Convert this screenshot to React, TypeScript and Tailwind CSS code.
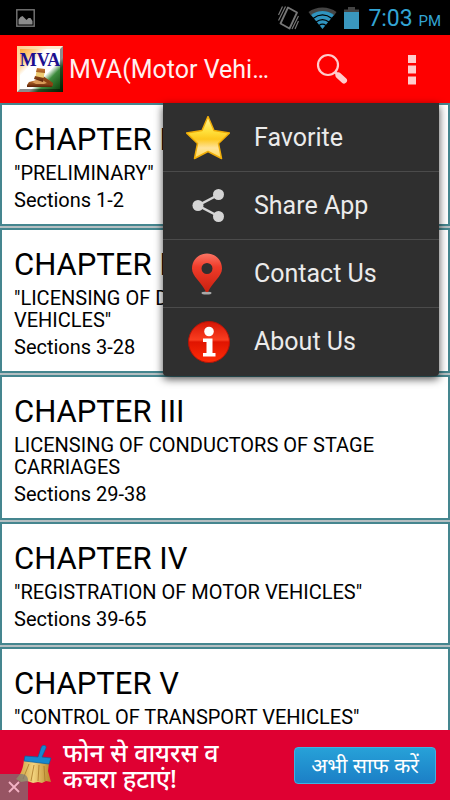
import type { ReactNode } from 'react';

const chapters = [
  { title: 'CHAPTER I', text: '"PRELIMINARY"', sections: 'Sections 1-2' },
  { title: 'CHAPTER II', text: '"LICENSING OF DRIVERS OF MOTOR VEHICLES"', sections: 'Sections 3-28' },
  { title: 'CHAPTER III', text: 'LICENSING OF CONDUCTORS OF STAGE CARRIAGES', sections: 'Sections 29-38' },
  { title: 'CHAPTER IV', text: '"REGISTRATION OF MOTOR VEHICLES"', sections: 'Sections 39-65' },
  { title: 'CHAPTER V', text: '"CONTROL OF TRANSPORT VEHICLES"', sections: 'Sections 66-96' },
];

function StatusBar() {
  return (
    <div className="flex h-[35px] shrink-0 items-center bg-black pl-4 pr-[9px] text-[#33a5d4]">
      <svg width="19" height="18" viewBox="0 0 19 18" aria-hidden="true">
        <rect x="0.8" y="0.8" width="17.4" height="16.4" fill="none" stroke="#777" strokeWidth="1.4" />
        <path d="M2.5 15.5v-5l2-2.5 2-1 2 2 2 2 2-2h2l2 3v3.500z" fill="#8c8c8c" />
      </svg>
      <div className="flex-1" />
      <svg width="21" height="24" viewBox="0 0 21 24" fill="none" stroke="#777" aria-hidden="true">
        <path d="M10 1.500l9 5-7.500 16-9-5z" strokeWidth="1.800" strokeLinejoin="round" />
        <path d="M4.500 0.500L0.500 9M7.500 0.500L0.500 14.500M20.500 10L14 23M20.500 15L17 23" strokeWidth="1.200" />
      </svg>
      <svg className="ml-[9px]" width="29" height="22" viewBox="0 0 29 22" aria-hidden="true">
        <path d="M0.500 5C8-1 21-1 28.500 5L26 8.500C19 3 10 3 3 8.500z" fill="#444" />
        <path d="M3 8C10 2.800 19 2.800 26 8L14.500 22z" fill="#2f94c0" />
        <path d="M5 11.500c6-4.500 13-4.500 19 0M8 15c4-3 9-3 13 0M11 18.500c2-1.500 5-1.500 7 0" fill="none" stroke="#000" strokeWidth="1.300" />
      </svg>
      <svg className="ml-[7px]" width="15" height="22" viewBox="0 0 15 22" aria-hidden="true">
        <path d="M0 2.500h4V0h7v2.500h4V6H0z" fill="#444" />
        <rect y="5" width="15" height="17" fill="#3a97be" />
      </svg>
      <span className="ml-[9px] pt-1 text-[23px] leading-[31px]">
        7:03 <span className="text-[15px]">PM</span>
      </span>
    </div>
  );
}

function AppLogo() {
  return (
    <svg width="46" height="46" viewBox="0 0 46 46" className="shrink-0" aria-hidden="true">
      <defs>
        <linearGradient id="flag" x1="0" y1="0" x2="1" y2="1">
          <stop offset="0" stopColor="#ff9b20" />
          <stop offset="0.24" stopColor="#ffd08a" />
          <stop offset="0.36" stopColor="#fff" />
          <stop offset="0.62" stopColor="#fff" />
          <stop offset="0.72" stopColor="#3d8b3d" />
          <stop offset="1" stopColor="#023402" />
        </linearGradient>
        <linearGradient id="wood" x1="0" y1="0" x2="0" y2="1">
          <stop offset="0" stopColor="#c87832" />
          <stop offset="1" stopColor="#5e2208" />
        </linearGradient>
      </defs>
      <rect width="46" height="46" fill="url(#flag)" />
      <path d="M0 46V0h46l-3 3H3v40z" fill="#ffe3ba" opacity="0.700" />
      <path d="M46 0v46H0l3-3h40V3z" fill="#000" opacity="0.450" />
      <text x="23" y="20" textAnchor="middle" fontFamily="Liberation Serif, serif" fontWeight="bold" fontSize="18" fill="#1c1090">
        MVA
      </text>
      <path d="M10 39l2-3 8-2h12l3 3v4H10z" fill="url(#wood)" />
      <path d="M15 36l5-2h9l3 2-5 2h-8z" fill="#d99a58" />
      <path d="M26 30l10 7 0 3-3-1-9-6z" fill="#8b4213" />
      <path d="M20 23l8 2-2 10-8-2z" fill="#eecb72" />
      <path d="M20 22l8 1 0 4-9-1zM18 30l9 2-1 4-9-3z" fill="url(#wood)" />
    </svg>
  );
}

function StarIcon() {
  return (
    <svg width="44" height="44" viewBox="0 0 44 44" aria-hidden="true">
      <defs>
        <linearGradient id="gold" x1="0" y1="0" x2="0" y2="1">
          <stop offset="0" stopColor="#fff6a0" />
          <stop offset="0.35" stopColor="#ffe13c" />
          <stop offset="0.54" stopColor="#fdc81e" />
          <stop offset="0.75" stopColor="#ffe39a" />
          <stop offset="1" stopColor="#ffdc55" />
        </linearGradient>
      </defs>
      <path d="M22 0.500l6 14 15.500 2.500-11 10.500 3 15L22 35.500 8.500 42.500l3-15L0.500 17l15.500-2.500z" fill="url(#gold)" stroke="#f0ad08" strokeWidth="1.500" strokeLinejoin="round" />
    </svg>
  );
}

function ShareIcon() {
  return (
    <svg width="44" height="44" viewBox="0 0 44 44" fill="#d4d4d4" aria-hidden="true">
      <path d="M33 10.500L12 21.500l21 11" fill="none" stroke="#d4d4d4" strokeWidth="2.500" />
      <circle cx="32.500" cy="10.500" r="5.500" />
      <circle cx="12" cy="21.500" r="5.500" />
      <circle cx="32.500" cy="32.500" r="5.500" />
    </svg>
  );
}

function PinIcon() {
  return (
    <svg width="44" height="44" viewBox="0 0 44 44" aria-hidden="true">
      <defs>
        <linearGradient id="pin" x1="0" y1="0" x2="0" y2="1">
          <stop offset="0" stopColor="#fb7565" />
          <stop offset="0.35" stopColor="#ef3c2a" />
          <stop offset="1" stopColor="#c9200f" />
        </linearGradient>
      </defs>
      <ellipse cx="20.500" cy="41" rx="5" ry="1.500" fill="#a9a9a9" />
      <path fillRule="evenodd" d="M21 1.500c8.500 0 15 6.500 15 15 0 8-9 13-14 23.500h-2C15 29.500 6 24.500 6 16.500 6 8 12.500 1.500 21 1.500zm0 9.500a5.500 5.500 0 100 11 5.500 5.500 0 000-11z" fill="url(#pin)" />
    </svg>
  );
}

function InfoIcon() {
  return (
    <svg width="44" height="44" viewBox="0 0 44 44" aria-hidden="true">
      <defs>
        <linearGradient id="info" x1="0" y1="0" x2="0" y2="1">
          <stop offset="0" stopColor="#d51505" />
          <stop offset="0.45" stopColor="#fa3d20" />
          <stop offset="0.5" stopColor="#e01400" />
          <stop offset="1" stopColor="#ff2d08" />
        </linearGradient>
      </defs>
      <circle cx="23" cy="22" r="20.500" fill="url(#info)" stroke="#b31408" strokeWidth="1" />
      <circle cx="23" cy="11.500" r="4.800" fill="#fff" />
      <path d="M17 18.500h9.500v14.500h3v3.500H17V33h3.500V22H17z" fill="#fff" />
    </svg>
  );
}

function MenuItem({ icon, label }: { icon: ReactNode; label: string }) {
  return (
    <button role="menuitem" className="flex h-[68px] w-full items-center gap-6 pl-[23px] text-left text-[25px] text-[#ebebeb]">
      {icon}
      {label}
    </button>
  );
}

function Header() {
  return (
    <header className="relative z-10 flex h-[68px] shrink-0 items-center bg-[#fe0000] pl-[17px]">
      <AppLogo />
      <h1 className="ml-1.5 min-w-0 flex-1 truncate pt-0.5 text-[25px] text-[#fff0f0]">MVA(Motor Vehi…</h1>
      <button aria-label="Search" className="flex h-full w-[84px] items-center justify-center">
        <svg width="32" height="32" viewBox="0 0 32 32" fill="none" stroke="#ffcccc" aria-hidden="true">
          <circle cx="12" cy="12" r="10" strokeWidth="2.200" />
          <path d="M19 19l4 4" strokeWidth="3" />
          <path d="M22.500 22.500l5.500 5" strokeWidth="6" strokeLinecap="round" />
        </svg>
      </button>
      <button aria-label="More options" className="flex h-full w-[76px] items-center justify-center pt-0.5">
        <svg width="8" height="30" viewBox="0 0 8 30" fill="#ffcccc" aria-hidden="true">
          <rect width="8" height="8" />
          <rect y="10.500" width="8" height="8" />
          <rect y="21.500" width="8" height="8" />
        </svg>
      </button>
      <div role="menu" className="absolute right-[11px] top-full w-[276px] divide-y divide-[#4b4b4b] rounded-b-sm bg-[#2f2f2f] pt-px shadow-[0_3px_8px_rgba(0,0,0,0.7)]">
        <MenuItem icon={<StarIcon />} label="Favorite" />
        <MenuItem icon={<ShareIcon />} label="Share App" />
        <MenuItem icon={<PinIcon />} label="Contact Us" />
        <MenuItem icon={<InfoIcon />} label="About Us" />
      </div>
    </header>
  );
}

function AdBanner() {
  return (
    <aside className="relative flex h-[70px] shrink-0 items-center bg-[#df0032] pl-4 pr-[14px] font-['Noto_Sans','Noto_Sans_Devanagari',sans-serif] text-white">
      <svg width="36" height="40" viewBox="0 0 36 40" className="shrink-0" aria-hidden="true">
        <defs>
          <linearGradient id="straw" x1="0" y1="0" x2="1" y2="0">
            <stop offset="0" stopColor="#c99a3c" />
            <stop offset="0.5" stopColor="#f1d27d" />
            <stop offset="1" stopColor="#b98528" />
          </linearGradient>
        </defs>
        <path d="M8 15l25 3-1 8 3 11-5-1-4 2-4-1-5 1-6-2-6 1-5-3c5-5 7-10 8-19z" fill="url(#straw)" />
        <path d="M13 19L7 34M18 20l-3 16M23 20l-1 16M28 21l1 15" stroke="#a9782a" strokeWidth="0.800" />
        <path d="M9 11l13 1 3-9c1-4 6-3 5 0l-4 9 9 1-2 6-25-3z" fill="#1687cf" stroke="#0c5d9c" strokeWidth="0.700" />
      </svg>
      <p className="ml-[11px] flex-1 text-[25px] font-medium leading-[26px]">
        फोन से वायरस व
        <br />
        कचरा हटाएं!
      </p>
      <button className="h-[37px] w-[142px] rounded-sm border border-[#3fb2e2] bg-linear-to-b from-[#27a1d8] to-[#1c7fc6] text-[21px] leading-[26px]">
        अभी साफ करें
      </button>
      <button aria-label="Close ad" className="absolute bottom-0 left-0 flex h-[26px] w-7 items-center justify-center rounded-tr-md bg-[#777]/70">
        <svg width="12" height="12" viewBox="0 0 12 12" stroke="#f3b3c5" strokeWidth="1.800" aria-hidden="true">
          <path d="M1 1l10 10M11 1L1 11" />
        </svg>
      </button>
    </aside>
  );
}

export default function App() {
  return (
    <div className="flex h-screen flex-col overflow-hidden bg-white font-[Roboto,sans-serif]">
      <StatusBar />
      <Header />
      <main className="min-h-0 flex-1 overflow-hidden bg-[#b5bfc2]">
        <ul className="flex flex-col gap-0.5">
          {chapters.map((chapter) => (
            <li key={chapter.title} className="border-2 border-[#45868f] bg-white px-3 pb-3 pt-[17px] text-black">
              <h2 className="text-[31px] leading-9">{chapter.title}</h2>
              <p className="mt-1 text-[20px] leading-[22px]">{chapter.text}</p>
              <p className="mt-1 text-[20px] leading-6">{chapter.sections}</p>
            </li>
          ))}
        </ul>
      </main>
      <AdBanner />
    </div>
  );
}
